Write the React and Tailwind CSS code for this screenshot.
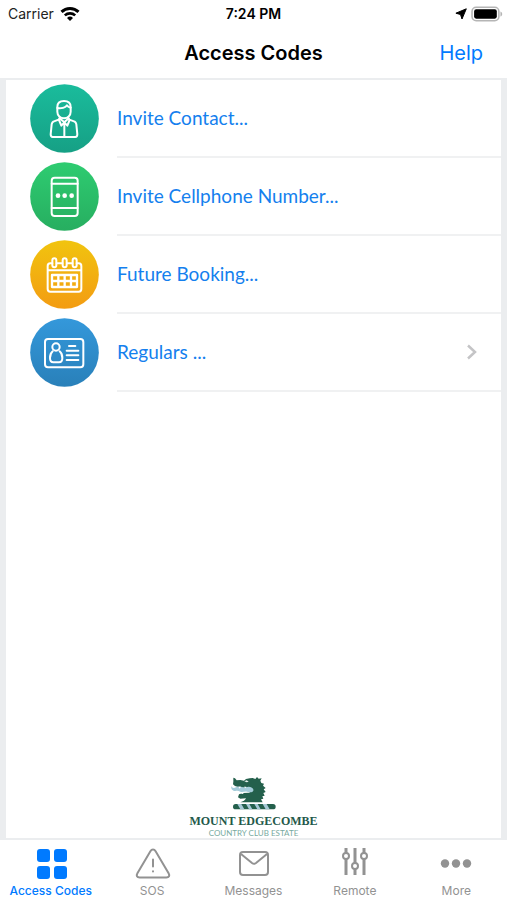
const ContactIcon = () => (
  <g>
    <path d="M112 86c0-12 8-18 20-18s20 6 20 18v14c0 12-9 20-20 20s-20-8-20-20z" />
    <path d="M112 89c12 2 25-1 29-8 2 4 6 6 11 7" />
    <path d="M119 119l-3 5-16 6c-3 2-4 4-5 8l-3 30c0 5 2 8 6 8h68c4 0 6-3 6-8l-3-30c-1-4-2-6-5-8l-16-6-3-5" />
    <path d="M117 125l7 17 9-10 9 10 7-17M133 132v43M119 120l14 12 13-12" />
  </g>
);

const PhoneIcon = () => (
  <g>
    <rect x="95" y="64" width="78" height="115" rx="9" />
    <path d="M95 82h78M95 155h78" />
    <g fill="#fff" stroke="none">
      <circle cx="114" cy="118" r="7" />
      <circle cx="134" cy="118" r="7" />
      <circle cx="155" cy="118" r="7" />
    </g>
  </g>
);

const CalendarIcon = () => (
  <g>
    <path d="M97 87h-6c-5 0-8 3-8 8v69c0 5 3 8 8 8h85c5 0 8-3 8-8V95c0-5-3-8-8-8h-6M110 87h17M141 87h16M83 108h101" />
    <rect x="97" y="72" width="12" height="27" rx="6" />
    <rect x="128" y="72" width="12" height="27" rx="6" />
    <rect x="158" y="72" width="12" height="27" rx="6" />
    <path d="M96 122h75v36H96zM96 140h75M115 122v36M134 122v36M153 122v36" strokeWidth="7" />
  </g>
);

const IdCardIcon = () => (
  <g>
    <rect x="75" y="80" width="115" height="85" rx="9" />
    <circle cx="108" cy="104" r="11" />
    <path d="M98 117c-6 5-8 12-8 20 0 9 4 13 10 13h17c6 0 10-4 10-13 0-8-2-15-8-20" />
    <path d="M147 101h19M140 115h35M140 129h35M140 143h35" />
  </g>
);

const rows = [
  { id: 'contact', label: 'Invite Contact...', Icon: ContactIcon, from: '#1abc9c', to: '#16a085' },
  { id: 'cellphone', label: 'Invite Cellphone Number...', Icon: PhoneIcon, from: '#2ecc71', to: '#27ae60' },
  { id: 'booking', label: 'Future Booking...', Icon: CalendarIcon, from: '#f1c40f', to: '#f39c12' },
  { id: 'regulars', label: 'Regulars ...', Icon: IdCardIcon, from: '#3498db', to: '#2980b9', chevron: true }
];

const GridIcon = () => (
  <g fill="currentColor">
    <rect x="6" y="4" width="13" height="13" rx="3" />
    <rect x="23" y="4" width="13" height="13" rx="3" />
    <rect x="6" y="21" width="13" height="13" rx="3" />
    <rect x="23" y="21" width="13" height="13" rx="3" />
  </g>
);

const SosIcon = () => (
  <g fill="none" stroke="currentColor" strokeWidth="2" strokeLinecap="round" strokeLinejoin="round">
    <path d="M18.400 6.200L5.400 28.200C4 30.600 5 32.500 7.600 32.500h26.800c2.600 0 3.600-1.900 2.200-4.300l-13-22c-1.400-2.400-3.800-2.400-5.200 0z" />
    <path d="M21 14.500v7M21 26.300v.2" />
  </g>
);

const MailIcon = () => (
  <g fill="none" stroke="currentColor" strokeWidth="2" strokeLinejoin="round">
    <rect x="7" y="7" width="28" height="23" rx="3" />
    <path d="M8 9l11 9c1.300 1 2.700 1 4 0L34 9" />
  </g>
);

const RemoteIcon = () => (
  <g fill="none" stroke="currentColor" strokeWidth="3">
    <path d="M11 3v5M11 14v16M20 3v15M20 24v6M29 3v5M29 14v16" />
    <g strokeWidth="2">
      <circle cx="11" cy="11" r="3" />
      <circle cx="20" cy="21" r="3" />
      <circle cx="29" cy="11" r="3" />
    </g>
  </g>
);

const MoreIcon = () => (
  <g fill="currentColor">
    <circle cx="9" cy="18.5" r="4.2" />
    <circle cx="20" cy="18.5" r="4.2" />
    <circle cx="31" cy="18.5" r="4.2" />
  </g>
);

const tabs = [
  { id: 'codes', label: 'Access Codes', Icon: GridIcon, active: true },
  { id: 'sos', label: 'SOS', Icon: SosIcon },
  { id: 'messages', label: 'Messages', Icon: MailIcon },
  { id: 'remote', label: 'Remote', Icon: RemoteIcon },
  { id: 'more', label: 'More', Icon: MoreIcon }
];

const StatusBar = () => (
  <div className="grid h-7 grid-cols-3 items-center px-2 text-sm text-[#222]">
    <div className="flex items-center gap-[6px]">
      <span>Carrier</span>
      <svg viewBox="0 0 20 15" className="h-4 w-5" fill="none" stroke="#000" strokeWidth="3">
        <path d="M1.5 5.3a12.3 12.3 0 0 1 17 0" />
        <path d="M4.8 8.9a7.6 7.6 0 0 1 10.4 0" strokeWidth="2.6" />
        <path d="M7 11.400a4.400 4.400 0 0 1 6 0l-3 3z" fill="#000" stroke="none" />
      </svg>
    </div>
    <span className="text-center font-semibold text-black">7:24 PM</span>
    <div className="-mr-1 flex items-center justify-end gap-1">
      <svg viewBox="0 0 12 12" className="size-3" fill="#000" stroke="#000" strokeWidth="1" strokeLinejoin="round">
        <path d="M11.3 .8L7 11 5.500 6.500 .9 5.200z" />
      </svg>
      <svg viewBox="0 0 31 15" className="h-4 w-8">
        <rect x="1" y="1" width="26" height="13" rx="4" fill="#fff" stroke="#b5b5b5" strokeWidth="1.5" />
        <rect x="3" y="3" width="22" height="9" rx="2" />
        <path d="M28.5 5c2.3.8 2.3 4.2 0 5z" fill="#b5b5b5" />
      </svg>
    </div>
  </div>
);

const EstateLogo = () => (
  <div className="flex flex-col items-center">
    <svg viewBox="9 12 144 102" className="mb-1 h-[34px] w-12" aria-hidden="true">
      <path
        d="M19 17l5 2 5 6 11-1 11 2 6-5 11-2 9-1 8 3 5-6 5 5 9-1-4 7 3 7 8 2-3 6 8 7-6 4 6 8-7 3 4 8-7 2 3 7-7 2 5 9H40c8-2 15-6 17-12l-17 1-7-4 3-9 13-4 18-1 8-9-9-7-24 1-18-5-6-5 1-8z"
        fill="#24604c"
      />
      <path
        d="M13 42c3 7 8 7 14 4 7-4 14-3 20 0 7 3 12-3 19-2 9 1 15 7 13 12-3 6-12 5-19 3-8-2-13 3-20 0-6-3-9-3-15-2-8 1-14-7-12-15z"
        fill="#a5ccda"
      />
      <path d="M34 44l4 6 4-6M51 44l4 5 3-5M43 66l3-6 4 5" fill="#fff" />
      <path d="M52 28l7-3 6 4-6 2z" fill="#e5f0ed" />
      <rect x="18" y="96" width="128" height="16" rx="8" fill="#24604c" />
      <path d="M31 96l9 16h12l-9-16zM57 96l9 16h10l-9-16zM82 96l9 16h10l-9-16zM107 96l9 16h12l-9-16z" fill="#a5c8d5" />
    </svg>
    <p className="font-['Liberation_Serif',serif] text-xs leading-[14px] font-bold text-[#24594a]">MOUNT EDGECOMBE</p>
    <p className="font-[Lato,sans-serif] text-[8px] leading-[10px] text-[#78aaa0]">COUNTRY CLUB ESTATE</p>
  </div>
);

const App = () => (
  <div className="flex min-h-screen flex-col bg-white font-[Inter,sans-serif]">
    <StatusBar />
    <header className="grid h-[50px] grid-cols-[1fr_auto_1fr] items-center px-6">
      <h1 className="col-start-2 text-xl font-semibold text-black">Access Codes</h1>
      <button type="button" className="justify-self-end text-xl text-[#007aff]">Help</button>
    </header>

    <main className="flex flex-1 flex-col justify-between border-x-6 border-y-2 border-[#ebedef]">
      <ul>
        {rows.map(({ id, label, Icon, from, to, chevron }) => (
          <li key={id}>
            <button type="button" className="flex h-[78px] w-full items-center gap-[18px] pl-6 text-left">
              <svg viewBox="30 17 207 207" className="mb-[2px] size-[69px] shrink-0" aria-hidden="true">
                <defs>
                  <linearGradient id={id} x1="0" y1="0" x2="0" y2="1">
                    <stop offset="0" stopColor={from} />
                    <stop offset="1" stopColor={to} />
                  </linearGradient>
                </defs>
                <circle cx="133.5" cy="120.5" r="103" fill={`url(#${id})`} />
                <g fill="none" stroke="#fff" strokeWidth="6" strokeLinecap="round" strokeLinejoin="round">
                  <Icon />
                </g>
              </svg>
              <span className="flex h-full flex-1 items-center justify-between border-b-2 border-[#f0f1f2] pr-6 font-[Lato,sans-serif] text-[19px] text-[#1480ee]">
                {label}
                {chevron && (
                  <svg viewBox="0 0 12 16" className="h-4 w-3" fill="none" stroke="#c4c4c6" strokeWidth="2.5">
                    <path d="M3 1.500L10 8l-7 6.500" />
                  </svg>
                )}
              </span>
            </button>
          </li>
        ))}
      </ul>
      <EstateLogo />
    </main>

    <nav className="grid grid-cols-5">
      {tabs.map(({ id, label, Icon, active }) => (
        <button
          key={id}
          type="button"
          className={`flex h-[60px] flex-col items-center pt-[5px] text-xs ${active ? 'font-medium text-[#007aff]' : 'text-[#929292]'}`}
        >
          <svg viewBox="0 0 40 38" className="h-[38px] w-10" aria-hidden="true">
            <Icon />
          </svg>
          <span>{label}</span>
        </button>
      ))}
    </nav>
  </div>
);

export default App;
